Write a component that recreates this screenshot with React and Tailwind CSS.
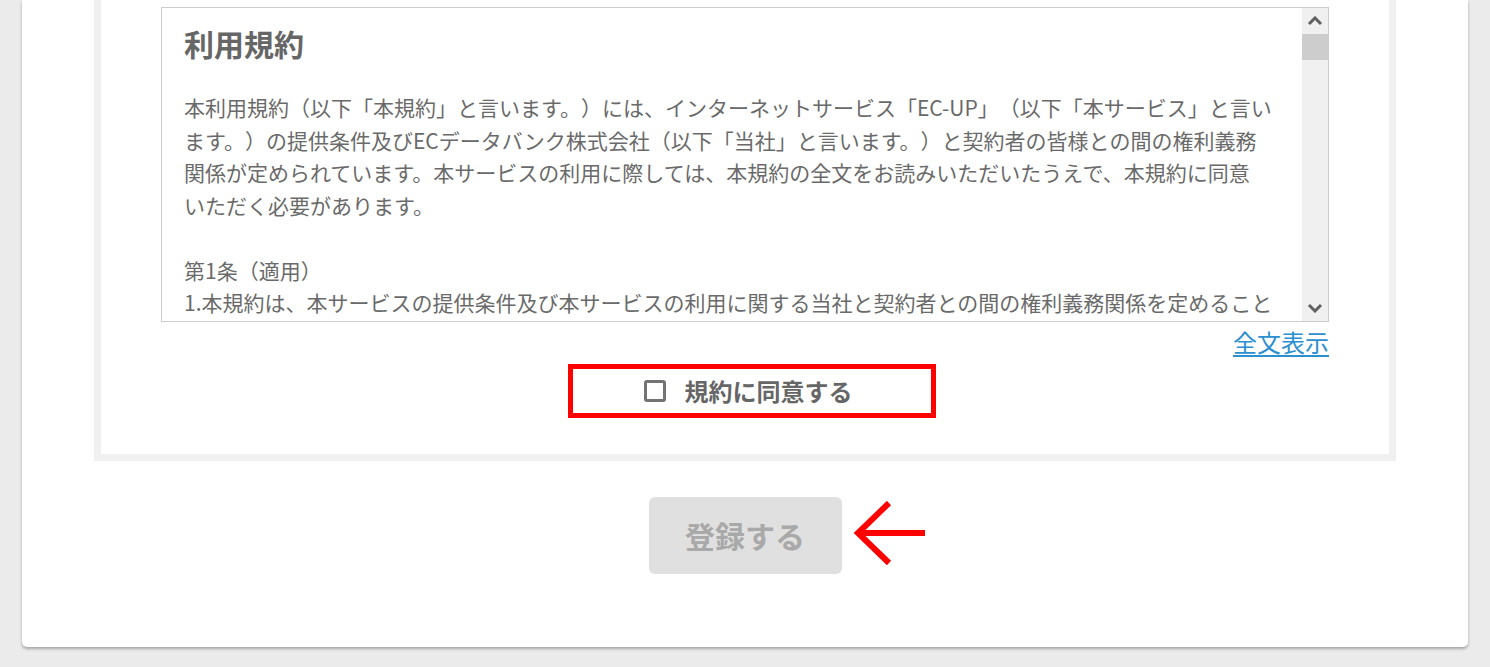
import React, { useState } from 'react';

const font = { fontFamily: '"Noto Sans CJK JP", "Noto Sans", sans-serif' };

function Chevron({ up }) {
    return (
        <svg width="16" height="10" viewBox="0 0 16 10">
            <polyline
                points={up ? '2,8 8,2 14,8' : '2,2 8,8 14,2'}
                fill="none"
                stroke="#606060"
                strokeWidth="3"
            />
        </svg>
    );
}

export default function App() {
    const [agreed, setAgreed] = useState(false);

    return (
        <div className="min-h-screen bg-[#ebebeb] px-[22px] pb-[20px] [text-spacing-trim:space-all]" style={font}>
            <div className="bg-white rounded-b-[5px] shadow-[0_2px_3px_rgba(0,0,0,0.3)] px-[72px] pb-[73px]">
                {/* terms section */}
                <section className="border-[7px] border-t-0 border-[#f0f0f0] px-[60px] pt-[7px] pb-[36px]">
                    <div className="h-[315px] border border-[#cccccc] flex">
                        <div className="flex-1 overflow-hidden pl-[22px] pt-[13px] text-[#6a6a6a]">
                            <h2 className="text-[30px] leading-[45px] font-bold mb-[25px] text-[#666666]">利用規約</h2>
                            <div className="text-[21px] leading-[32.5px] whitespace-nowrap">
                                <p>
                                    本利用規約（以下「本規約」と言います。）には、インターネットサービス「EC-UP」（以下「本サービス」と言い<br />
                                    ます。）の提供条件及びECデータバンク株式会社（以下「当社」と言います。）と契約者の皆様との間の権利義務<br />
                                    関係が定められています。本サービスの利用に際しては、本規約の全文をお読みいただいたうえで、本規約に同意<br />
                                    いただく必要があります。
                                </p>
                                <p className="mt-[32.5px]">第1条（適用）</p>
                                <p>1.本規約は、本サービスの提供条件及び本サービスの利用に関する当社と契約者との間の権利義務関係を定めること</p>
                            </div>
                        </div>
                        {/* scrollbar */}
                        <div className="w-[26px] bg-[#f0f0f0] flex flex-col">
                            <div className="h-[26px] flex items-center justify-center">
                                <Chevron up />
                            </div>
                            <div className="h-[26px] bg-[#cdcdcd]" />
                            <div className="flex-1" />
                            <div className="h-[26px] flex items-center justify-center">
                                <Chevron />
                            </div>
                        </div>
                    </div>

                    <div className="flex justify-end mt-[8px]">
                        <a href="#" className="text-[24px] leading-[24px] text-[#2b8fd0] underline underline-offset-[3px]">
                            全文表示
                        </a>
                    </div>

                    <div className="flex justify-center pl-[14px] mt-[10px]">
                        <label className="w-[368px] h-[54px] border-[5px] border-[#ff0000] flex items-center justify-center gap-[19px] pr-[8px] cursor-pointer">
                            <span
                                onClick={() => setAgreed(!agreed)}
                                className="w-[22px] h-[22px] border-[3px] border-[#737373] rounded-[3px] bg-white"
                            />
                            <span className="text-[24px] font-bold text-[#666666]">規約に同意する</span>
                        </label>
                    </div>
                </section>

                {/* submit */}
                <div className="flex justify-center mt-[36px]">
                    <div className="relative">
                        <button
                            disabled={!agreed}
                            className="w-[193px] h-[77px] rounded-[6px] bg-[#e0e0e0] text-[30px] font-bold text-[#a9a9a9]"
                        >
                            登録する
                        </button>
                        <svg
                            className="absolute left-[204px] top-[4px]"
                            width="74"
                            height="66"
                            viewBox="0 0 74 66"
                        >
                            <polyline points="36,2 5,32 36,62" fill="none" stroke="#ff0000" strokeWidth="6" />
                            <line x1="6" y1="32" x2="72" y2="32" stroke="#ff0000" strokeWidth="6" />
                        </svg>
                    </div>
                </div>
            </div>
        </div>
    );
}
